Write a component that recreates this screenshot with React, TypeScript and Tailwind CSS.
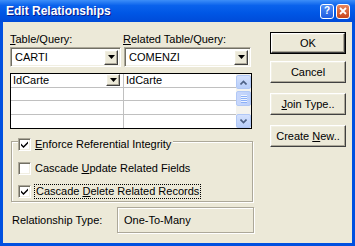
const raised =
  "border border-t-white border-l-white border-r-[#404040] border-b-[#404040] shadow-[inset_-1px_-1px_#ACA899,inset_1px_1px_#F1EFE2]";
const sunken =
  "border border-t-[#ACA899] border-l-[#ACA899] border-r-white border-b-white shadow-[inset_1px_1px_#716F64,inset_-1px_-1px_#F1EFE2]";

function Arrow() {
  return (
    <svg width="7" height="4" viewBox="0 0 7 4">
      <path d="M0 0h7L3.5 4z" fill="#000" />
    </svg>
  );
}

function DropButton({ className = "" }: { className?: string }) {
  return (
    <div className={`bg-[#ECE9D8] flex items-center justify-center ${raised} ${className}`}>
      <Arrow />
    </div>
  );
}

function Combo({ value, width }: { value: string; width: string }) {
  return (
    <div className={`${width} h-[20px] bg-white flex items-center p-[2px] ${sunken}`}>
      <span className="flex-1 pl-[2px]">{value}</span>
      <DropButton className="w-[14px] h-[15px]" />
    </div>
  );
}

function Check({ checked }: { checked: boolean }) {
  return (
    <div className={`w-[13px] h-[13px] bg-white flex items-center justify-center shrink-0 ${sunken}`}>
      {checked && (
        <svg width="7" height="7" viewBox="0 0 7 7">
          <path d="M0 2.5l2.5 2.5L7 0.5v2L2.5 7 0 4.5z" fill="#000" />
        </svg>
      )}
    </div>
  );
}

function Button({ children, isDefault = false }: { children: React.ReactNode; isDefault?: boolean }) {
  return (
    <div className={isDefault ? "border border-black" : ""}>
      <div
        className={`${isDefault ? "h-[20px]" : "h-[22px]"} bg-[#ECE9D8] flex items-center justify-center ${raised}`}
      >
        {children}
      </div>
    </div>
  );
}

function ScrollBtn({ up }: { up: boolean }) {
  return (
    <div className="h-[14px] rounded-[2px] bg-[linear-gradient(to_bottom,#D4E1FD,#B8CEF9)] border border-[#B1C8F6] flex items-center justify-center">
      <svg width="7" height="5" viewBox="0 0 7 5">
        <path
          d={up ? "M0.5 4.5L3.5 1.5L6.5 4.5" : "M0.5 0.5L3.5 3.5L6.5 0.5"}
          stroke="#4D6185"
          strokeWidth="1.6"
          fill="none"
        />
      </svg>
    </div>
  );
}

export default function App() {
  return (
    <div className="w-[355px] h-[246px] flex flex-col bg-[#0050E0] font-['Liberation_Sans',Arial,sans-serif] text-[11px] text-black leading-none">
      {/* Title bar */}
      <div className="h-[22px] pl-[6px] pr-[5px] flex items-center bg-[linear-gradient(to_bottom,#3D8EF8_0%,#0A62EC_25%,#0056E5_60%,#004BD8_100%)]">
        <span className="flex-1 text-white font-bold text-[12px] [text-shadow:1px_1px_#0A1A8A]">
          Edit Relationships
        </span>
        <div className="flex gap-[2px]">
          <div className="w-[14px] h-[15px] rounded-[3px] border border-white bg-[linear-gradient(to_bottom,#4F8EF7,#1E5CE0)] flex items-center justify-center text-white font-bold text-[10px]">
            ?
          </div>
          <div className="w-[14px] h-[15px] rounded-[3px] border border-white bg-[linear-gradient(to_bottom,#E8865D,#C8451C)] flex items-center justify-center">
            <svg width="8" height="8" viewBox="0 0 8 8">
              <path d="M1 1L7 7M7 1L1 7" stroke="#fff" strokeWidth="1.8" />
            </svg>
          </div>
        </div>
      </div>

      {/* Body */}
      <div className="flex-1 px-[3px] pb-[3px] flex">
        <div className="flex-1 bg-[#ECE9D8] flex pl-[7px] pt-[10px]">
          {/* Left column */}
          <div className="w-[244px] flex flex-col">
            <div className="flex h-[14px] items-center">
              <span className="w-[113px]">
                <u>T</u>able/Query:
              </span>
              <span>
                <u>R</u>elated Table/Query:
              </span>
            </div>
            <div className="flex gap-[3px] mt-[1px]">
              <Combo value="CARTI" width="w-[111px]" />
              <Combo value="COMENZI" width="w-[127px]" />
            </div>

            {/* Field grid */}
            <div className="mt-[6px] w-[242px] h-[56px] border border-black bg-white flex">
              <div className="flex flex-col w-[225px]">
                <div className="h-[14px] flex border-b border-[#C0C0C0]">
                  <div className="w-[113px] border-r border-[#C0C0C0] flex items-center pl-[2px] pr-[3px]">
                    <span className="flex-1">IdCarte</span>
                    <DropButton className="w-[14px] h-[12px]" />
                  </div>
                  <div className="flex-1 flex items-center pl-[2px]">IdCarte</div>
                </div>
                {[0, 1, 2].map((i) => (
                  <div key={i} className={`h-[14px] flex ${i < 2 ? "border-b border-[#C0C0C0]" : ""}`}>
                    <div className="w-[113px] border-r border-[#C0C0C0]" />
                    <div className="flex-1" />
                  </div>
                ))}
              </div>
              <div className="w-[15px] bg-[#F4F3EE] flex flex-col pt-[1px]">
                <ScrollBtn up />
                <div className="mt-[2px] h-[15px] rounded-[2px] bg-[linear-gradient(to_right,#C9D8FC,#BCD0FA)] border border-[#B1C8F6] flex flex-col items-center justify-center gap-[1px]">
                  {[0, 1, 2, 3].map((i) => (
                    <div key={i} className="w-[6px] h-[1px] bg-[#EEF4FE] shadow-[0_1px_#8CB0F8]" />
                  ))}
                </div>
                <div className="flex-1" />
                <ScrollBtn up={false} />
              </div>
            </div>

            {/* Referential integrity group */}
            <div className="relative mt-[12px] ml-[1px] w-[242px] h-[61px] border border-[#ACA899] shadow-[inset_1px_1px_#fff,1px_1px_#fff] pt-[20px] pl-[6px] flex flex-col gap-[10px]">
              <div className="absolute -top-[4px] left-[6px] bg-[#ECE9D8] flex items-center gap-[4px] pr-[2px]">
                <Check checked />
                <span>
                  <u>E</u>nforce Referential Integrity
                </span>
              </div>
              <div className="flex items-center gap-[4px] h-[13px]">
                <Check checked={false} />
                <span>
                  Cascade <u>U</u>pdate Related Fields
                </span>
              </div>
              <div className="flex items-center gap-[3px] h-[13px]">
                <Check checked />
                <span className="border border-dotted border-black px-[1px] py-[1px]">
                  Cascade <u>D</u>elete Related Records
                </span>
              </div>
            </div>

            {/* Relationship type */}
            <div className="mt-[5px] flex items-center">
              <span className="ml-[2px] w-[105px]">Relationship Type:</span>
              <div className="w-[137px] h-[26px] border border-[#ACA899] shadow-[inset_1px_1px_#fff,1px_1px_#fff] flex items-center pl-[6px]">
                One-To-Many
              </div>
            </div>
          </div>

          {/* Right column */}
          <div className="ml-[16px] w-[76px] flex flex-col">
            <Button isDefault>OK</Button>
            <div className="mt-[7px]">
              <Button>Cancel</Button>
            </div>
            <div className="mt-[10px]">
              <Button>
                <span>
                  <u>J</u>oin Type..
                </span>
              </Button>
            </div>
            <div className="mt-[10px]">
              <Button>
                <span>
                  Create <u>N</u>ew..
                </span>
              </Button>
            </div>
          </div>
        </div>
      </div>
    </div>
  );
}
